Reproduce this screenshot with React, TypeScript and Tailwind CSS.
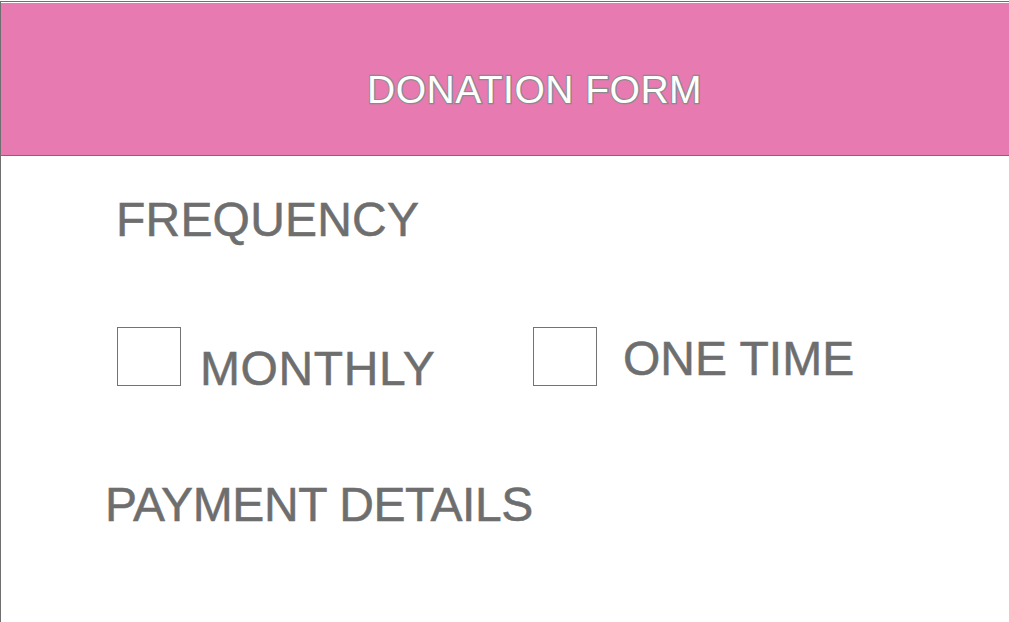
import React from "react";

const labelClass =
  "text-[48px] leading-none text-[#6e6e6e] [-webkit-text-stroke:0.5px_#6e6e6e] font-['Liberation_Sans',Arial,sans-serif]";

const CheckOption: React.FC<{ label: string; extra: string; offset: string; width?: string }> = ({
  label,
  extra,
  offset,
  width,
}) => {
  return (
    <label className={`flex items-start ${extra} ${width ?? ""}`}>
      <span className="block w-[64px] h-[59px] border border-[#737373] bg-white shrink-0" />
      <span className={`${labelClass} ${offset}`}>{label}</span>
    </label>
  );
};

const App: React.FC = () => {
  return (
    <div className="min-h-screen bg-white border-l border-[#6f6f6f] font-['Liberation_Sans',Arial,sans-serif]">
      <div className="mt-px border-t border-[#6f6f6f] pt-px">
        <header className="h-[153px] bg-[#e67ab1] border-b border-[#707070] pl-[366px] pt-[67px]">
          <h1 className="text-[39px] leading-none tracking-[0.5px] text-white [-webkit-text-stroke:2.4px_#8a8a8a] [paint-order:stroke_fill]">
            DONATION FORM
          </h1>
        </header>
      </div>

      <main className="pl-[115px]">
        <h2 className={`${labelClass} mt-[40px] tracking-[0.2px]`}>FREQUENCY</h2>

        <div className="flex mt-[83px] pl-[1px]">
          <CheckOption
            label="MONTHLY"
            extra="gap-[19px]"
            offset="mt-[18px] tracking-[0.6px]"
            width="w-[416px]"
          />
          <CheckOption label="ONE TIME" extra="gap-[26px]" offset="mt-[8px]" />
        </div>

        <h2 className={`${labelClass} tracking-[-0.4px] mt-[88px] -ml-[11px]`}>PAYMENT DETAILS</h2>
      </main>
    </div>
  );
};

export default App;
